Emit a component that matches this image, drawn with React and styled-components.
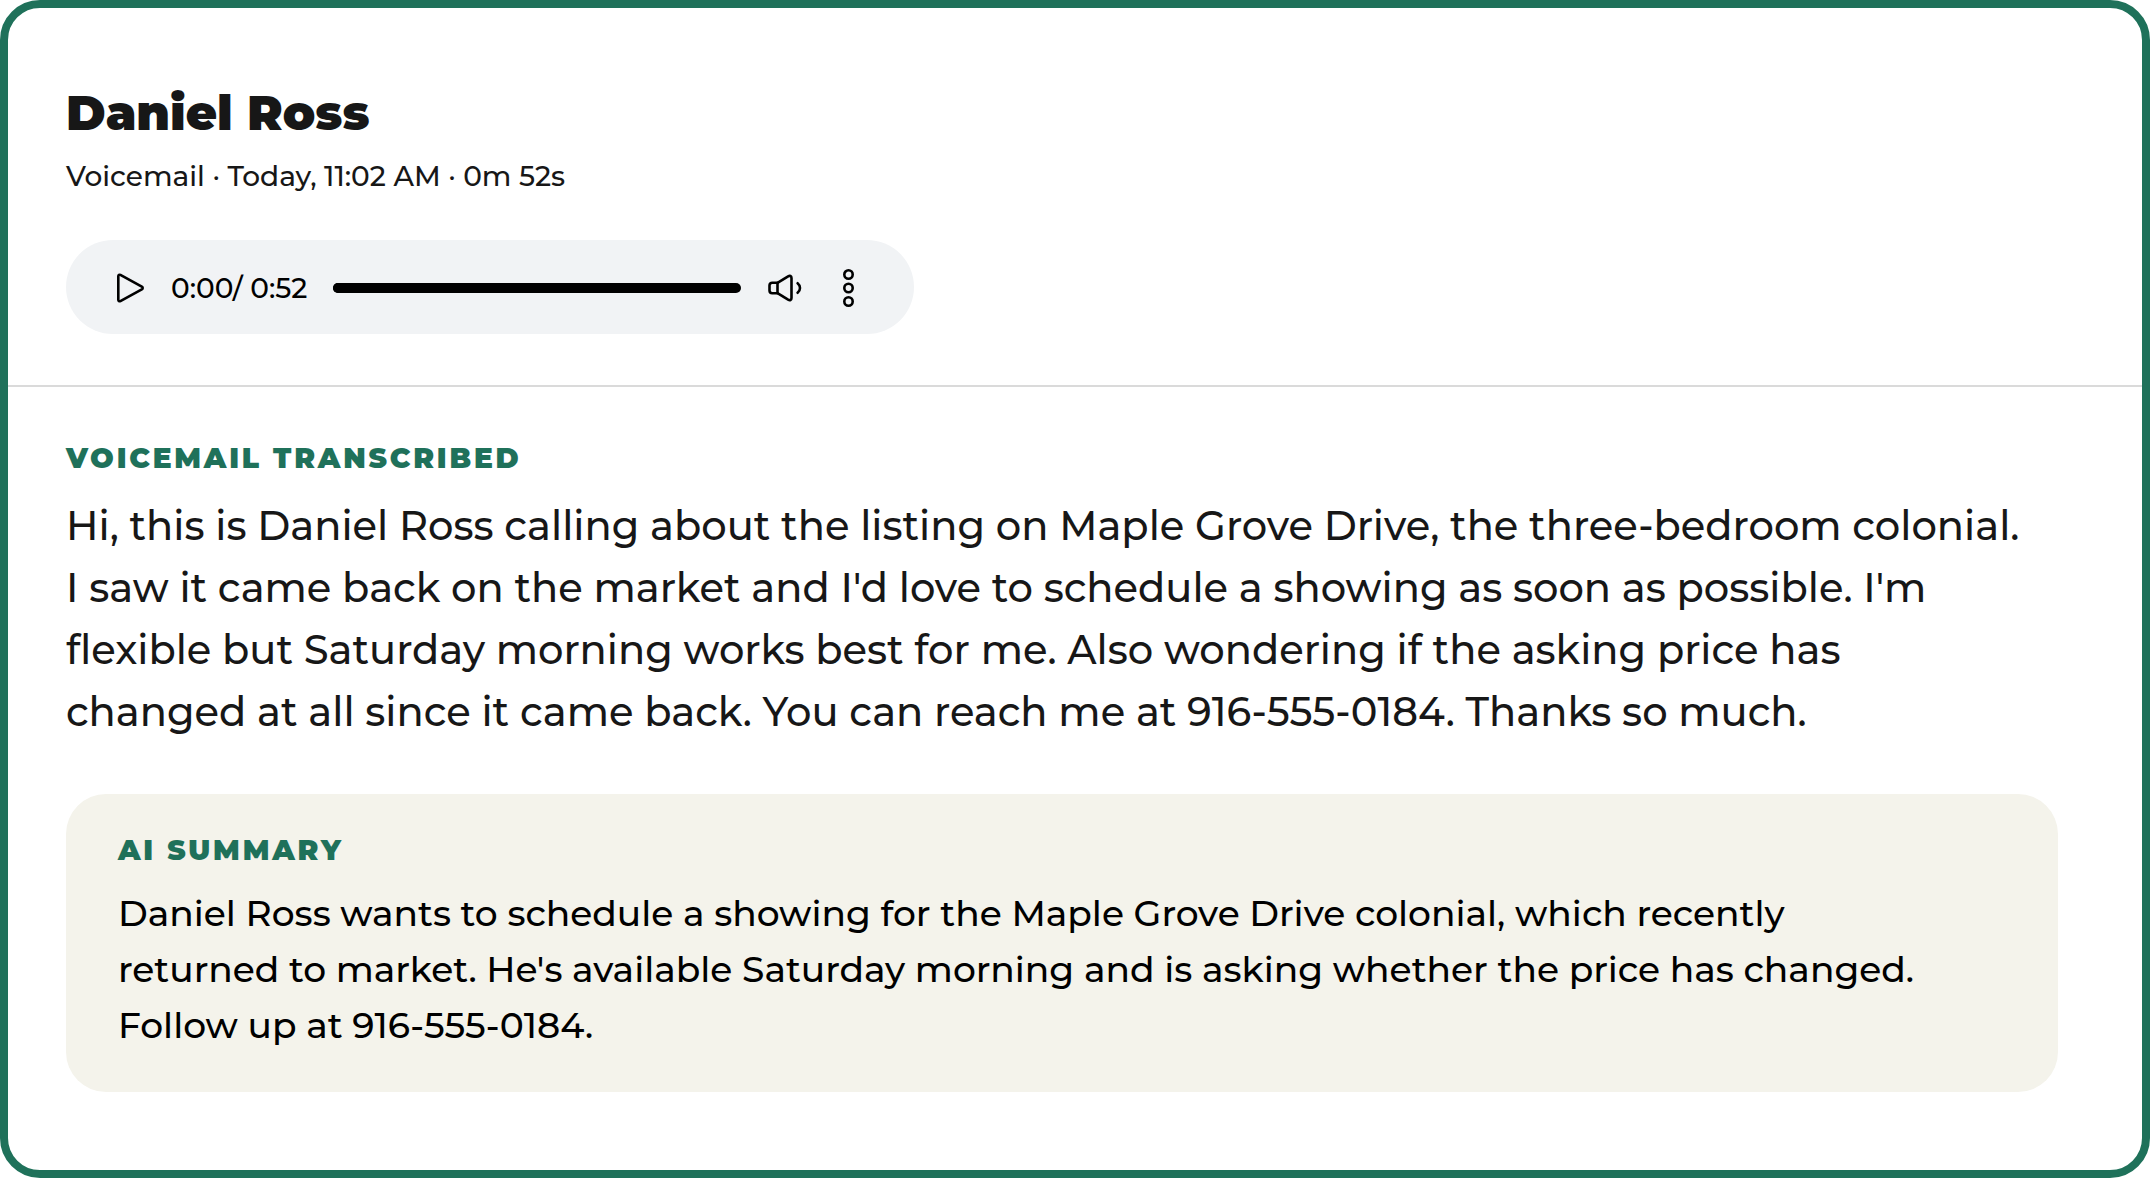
import React from "react";
import styled, { createGlobalStyle } from "styled-components";

const GlobalStyle = createGlobalStyle`
  *, *::before, *::after { box-sizing: border-box; }
  body {
    margin: 0;
    background: #ffffff;
    color: #171717;
    font-family: Montserrat, Inter, "Open Sans", sans-serif;
    font-weight: 500;
  }
  h1, h2, p { margin: 0; }
`;

const Card = styled.main`
  display: flex;
  flex-direction: column;
  min-height: 100vh;
  border: 8px solid #1f715a;
  border-radius: 40px;
  background: #ffffff;
`;

const Header = styled.header`
  display: flex;
  flex-direction: column;
  padding: 76px 84px 51px 58px;
  border-bottom: 2px solid #dadada;
`;

const Name = styled.h1`
  font-size: 48px;
  line-height: 58px;
  font-weight: 900;
`;

const Meta = styled.p`
  margin-top: 17px;
  font-size: 28px;
  line-height: 34px;
`;

const Player = styled.div`
  display: flex;
  align-items: center;
  gap: 27px;
  width: 100%;
  max-width: 848px;
  height: 94px;
  margin-top: 47px;
  padding: 2px 45px 0 50px;
  border-radius: 47px;
  background: #f1f3f5;
  color: #000000;
`;

const IconButton = styled.button`
  display: flex;
  flex: none;
  padding: 0;
  border: 0;
  background: none;
  color: inherit;
  cursor: pointer;
`;

const Icon = styled.svg`
  display: block;
  fill: none;
  stroke: currentColor;
  stroke-width: 2.6;
  stroke-linecap: round;
  stroke-linejoin: round;
`;

const Time = styled.span`
  flex: none;
  width: 135px;
  font-size: 28px;
  line-height: 34px;
  white-space: nowrap;
`;

const Track = styled.input`
  flex: 1;
  min-width: 0;
  height: 10px;
  margin: 0;
  border-radius: 5px;
  background: #000000;
  appearance: none;
  cursor: pointer;

  &::-webkit-slider-thumb {
    appearance: none;
    width: 10px;
    height: 10px;
    border-radius: 5px;
    background: #000000;
  }
`;

const Body = styled.div`
  display: flex;
  flex-direction: column;
  gap: 51px;
  padding: 54px 84px 78px 58px;
`;

const Section = styled.section`
  display: flex;
  flex-direction: column;
  gap: 20px;
`;

const Summary = styled(Section)`
  gap: 18px;
  padding: 39px 52px;
  border-radius: 40px;
  background: #f4f3eb;
  color: #000000;
`;

const Label = styled.h2`
  color: #1f715a;
  font-size: 28px;
  line-height: 34px;
  font-weight: 900;
  letter-spacing: 0.1em;
  text-transform: uppercase;
`;

const Transcript = styled.p`
  padding-right: 34px;
  font-size: 40px;
  line-height: 62px;
`;

const SummaryText = styled.p`
  padding-right: 68px;
  font-size: 36px;
  line-height: 56px;
`;

export default function App() {
  return (
    <>
      <GlobalStyle />
      <Card>
        <Header>
          <Name>Daniel Ross</Name>
          <Meta>Voicemail · Today, 11:02 AM · 0m 52s</Meta>
          <Player role="group" aria-label="Voicemail player">
            <IconButton type="button" aria-label="Play">
              <Icon width="28" height="30" viewBox="0 0 28 30">
                <path d="M2.3 3.2v23.6c0 1.2 1.1 1.8 2.1 1.3l21.4-11.7c1.2-.7 1.2-2.1 0-2.8L4.4 1.9C3.4 1.4 2.3 2 2.3 3.2Z" />
              </Icon>
            </IconButton>
            <Time>0:00/ 0:52</Time>
            <Track type="range" min="0" max="52" defaultValue="0" aria-label="Playback position" />
            <IconButton type="button" aria-label="Volume">
              <Icon width="34" height="28" viewBox="0 0 34 28">
                <path d="M9.5 8.8H4.2c-1.7 0-2.7 1-2.7 2.6v5.2c0 1.6 1 2.6 2.7 2.6h5.3Z" />
                <path d="M9.5 8.8 20.1 2.3c1.8-1 3.4-.3 3.4 1.7v20c0 2-1.6 2.7-3.4 1.7L9.5 19.2" />
                <path d="M29.6 9.2c3.2 2.6 3.2 7 0 9.6" />
              </Icon>
            </IconButton>
            <IconButton type="button" aria-label="More options">
              <Icon width="40" height="40" viewBox="0 0 40 40">
                <circle cx="19.5" cy="6.5" r="4.2" />
                <circle cx="19.5" cy="20" r="4.2" />
                <circle cx="19.5" cy="33.5" r="4.2" />
              </Icon>
            </IconButton>
          </Player>
        </Header>
        <Body>
          <Section>
            <Label>Voicemail transcribed</Label>
            <Transcript>
              Hi, this is Daniel Ross calling about the listing on Maple Grove Drive, the
              three-bedroom colonial. I saw it came back on the market and I'd love to
              schedule a showing as soon as possible. I'm flexible but Saturday morning
              works best for me. Also wondering if the asking price has changed at all
              since it came back. You can reach me at 916-555-0184. Thanks so much.
            </Transcript>
          </Section>
          <Summary>
            <Label>AI summary</Label>
            <SummaryText>
              Daniel Ross wants to schedule a showing for the Maple Grove Drive colonial,
              which recently returned to market. He's available Saturday morning and is
              asking whether the price has changed. Follow up at 916-555-0184.
            </SummaryText>
          </Summary>
        </Body>
      </Card>
    </>
  );
}
